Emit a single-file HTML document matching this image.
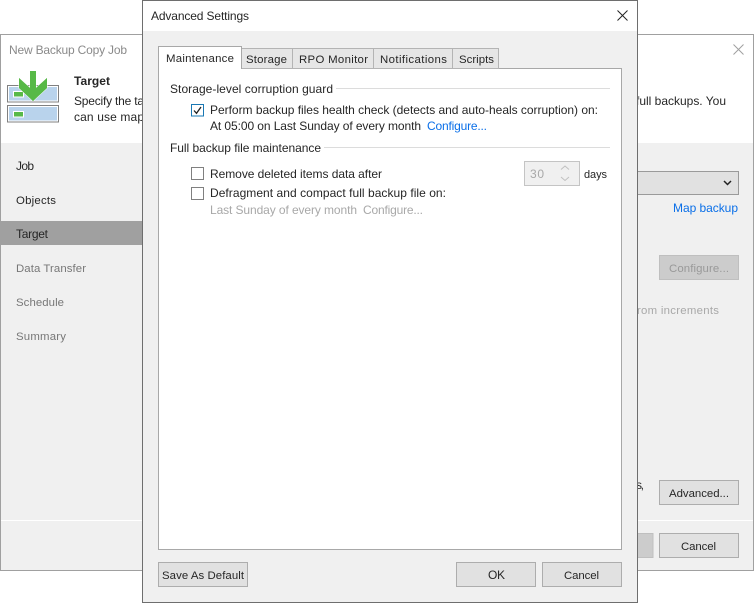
<!DOCTYPE html>
<html><head><meta charset="utf-8"><style>
html,body{margin:0;padding:0;background:#fff;width:754px;height:603px;overflow:hidden}
svg{display:block}
text{font-family:"Liberation Sans",sans-serif;font-size:12px;fill:#262626}
.g{fill:#777}.d{fill:#a8a8a8}.b{fill:#0a6fe8}.btn{fill:#e1e1e1;stroke:#adadad}
.s{font-size:11.4px}
</style></head><body>
<svg width="754" height="603" viewBox="0 0 754 603" xmlns="http://www.w3.org/2000/svg">
<!-- back window -->
<rect x="0.5" y="34.5" width="753" height="536" fill="#f0f0f0" stroke="#a0a0a0"/>
<rect x="1" y="35" width="752" height="108" fill="#fff"/>
<rect x="1" y="520" width="752" height="1" fill="#fff"/>
<text x="9" y="54" class="g" textLength="118" lengthAdjust="spacing" style="fill:#8a8a8a">New Backup Copy Job</text>
<path d="M733.500 44.500l10 10M743.500 44.500l-10 10" stroke="#a0a0a0" fill="none"/>
<!-- icon -->
<rect x="7.500" y="85.500" width="51" height="16.500" fill="#b9d3ec" stroke="#808080"/>
<rect x="8.500" y="86.500" width="49" height="14.500" fill="none" stroke="#fff"/>
<rect x="7.500" y="105.500" width="51" height="16.500" fill="#b9d3ec" stroke="#808080"/>
<rect x="8.500" y="106.500" width="49" height="14.500" fill="none" stroke="#fff"/>
<rect x="13.500" y="91.500" width="10" height="5.500" fill="#57b947" stroke="#fff"/>
<rect x="13.500" y="111.500" width="10" height="5.500" fill="#57b947" stroke="#fff"/>
<path d="M30 71h6v17l11-10v10l-14 13-14-13v-10l11 10z" fill="#57b947" stroke="#fff" stroke-width="1" paint-order="stroke"/>
<path d="M30 71h6v17l11-10v10l-14 13-14-13v-10l11 10z" fill="#57b947"/>
<text x="74" y="85" textLength="36" lengthAdjust="spacing" style="font-weight:bold">Target</text>
<text x="74" y="105" textLength="70" lengthAdjust="spacing">Specify the ta</text>
<text x="74" y="121" textLength="70" lengthAdjust="spacing">can use map</text>
<text x="636" y="105" textLength="90" lengthAdjust="spacing">full backups. You</text>
<!-- sidebar -->
<rect x="1" y="221" width="141" height="24" fill="#a0a0a0"/>
<text x="16" y="170" textLength="18" lengthAdjust="spacing">Job</text>
<text x="16" y="204" class="s" textLength="40" lengthAdjust="spacing">Objects</text>
<text x="16" y="238" textLength="32" lengthAdjust="spacing">Target</text>
<text x="16" y="272" class="g s" textLength="70" lengthAdjust="spacing">Data Transfer</text>
<text x="16" y="306" class="g s" textLength="48" lengthAdjust="spacing">Schedule</text>
<text x="16" y="340" class="g s" textLength="50" lengthAdjust="spacing">Summary</text>
<!-- back right controls -->
<rect x="630.500" y="171.500" width="108" height="23" fill="#e1e1e1" stroke="#9a9a9a"/>
<path d="M724 181l3.500 3.500 3.500-3.500" fill="none" stroke="#222" stroke-width="1.500"/>
<text x="673" y="212" class="b" textLength="65" lengthAdjust="spacing">Map backup</text>
<rect x="659.500" y="255.500" width="79" height="24" fill="#cccccc" stroke="#bfbfbf"/>
<text x="669" y="272" class="s" textLength="60" lengthAdjust="spacing" style="fill:#999">Configure...</text>
<text x="637" y="314" class="d s" textLength="82" lengthAdjust="spacing">rom increments</text>
<text x="636" y="489" textLength="8" lengthAdjust="spacing">s,</text>
<rect x="659.500" y="480.500" width="79" height="24" class="btn"/>
<text x="669" y="497" class="s" textLength="60" lengthAdjust="spacing">Advanced...</text>
<rect x="620" y="533.500" width="33" height="24" fill="#cccccc" stroke="#bfbfbf"/>
<rect x="659.500" y="533.500" width="79" height="24" class="btn"/>
<text x="681" y="550" class="s" textLength="35" lengthAdjust="spacing">Cancel</text>
<!-- front dialog -->
<rect x="142.500" y="0.500" width="495" height="602" fill="#f0f0f0" stroke="#6e6e6e"/>
<rect x="143" y="1" width="494" height="30" fill="#fff"/>
<text x="151" y="20" textLength="98" lengthAdjust="spacing">Advanced Settings</text>
<path d="M617.500 10.500l10 10M627.500 10.500l-10 10" stroke="#222" fill="none"/>
<!-- tabs -->
<rect x="158.500" y="68.500" width="463" height="481" fill="#fff" stroke="#a8a8a8"/>
<rect x="241.500" y="48.500" width="51" height="20" fill="#e6e6e6" stroke="#b4b4b4"/>
<rect x="292.500" y="48.500" width="81" height="20" fill="#e6e6e6" stroke="#b4b4b4"/>
<rect x="373.500" y="48.500" width="79" height="20" fill="#e6e6e6" stroke="#b4b4b4"/>
<rect x="452.500" y="48.500" width="46" height="20" fill="#e6e6e6" stroke="#b4b4b4"/>
<path d="M158.500 69V46.500h83V69" fill="#fff" stroke="#a8a8a8"/>
<rect x="159" y="66" width="82" height="4" fill="#fff"/>
<text x="166" y="62" class="s" textLength="68" lengthAdjust="spacing">Maintenance</text>
<text x="246" y="63" class="s" textLength="41" lengthAdjust="spacing">Storage</text>
<text x="299" y="63" class="s" textLength="69" lengthAdjust="spacing">RPO Monitor</text>
<text x="380" y="63" class="s" textLength="67" lengthAdjust="spacing">Notifications</text>
<text x="459" y="63" class="s" textLength="35" lengthAdjust="spacing">Scripts</text>
<!-- group 1 -->
<text x="170" y="93" textLength="163" lengthAdjust="spacing">Storage-level corruption guard</text>
<rect x="336" y="88" width="274" height="1" fill="#dcdcdc"/>
<rect x="191.500" y="104.500" width="12" height="11.500" fill="#fff" stroke="#1a78b4"/>
<path d="M194 110.500l2.500 2.800 4.500-6.300" fill="none" stroke="#222" stroke-width="1.300"/>
<text x="210" y="114" textLength="388" lengthAdjust="spacing">Perform backup files health check (detects and auto-heals corruption) on:</text>
<text x="210" y="130" textLength="211" lengthAdjust="spacing">At 05:00 on Last Sunday of every month</text>
<text x="427" y="130" class="b" textLength="60" lengthAdjust="spacing">Configure...</text>
<!-- group 2 -->
<text x="170" y="152" textLength="151" lengthAdjust="spacing">Full backup file maintenance</text>
<rect x="324" y="147" width="286" height="1" fill="#dcdcdc"/>
<rect x="191.500" y="167.500" width="12" height="12" fill="#fff" stroke="#808080"/>
<text x="210" y="178" textLength="172" lengthAdjust="spacing">Remove deleted items data after</text>
<rect x="524.500" y="161.500" width="55" height="24" fill="#f0f0f0" stroke="#c4c4c4"/>
<text x="530" y="178" class="d" textLength="14" lengthAdjust="spacing">30</text>
<path d="M561 169.500l4-3.500 4 3.500M561 177l4 3.500 4-3.500" fill="none" stroke="#c0c0c0"/>
<text x="584" y="178" style="font-size:11px" textLength="23" lengthAdjust="spacing">days</text>
<rect x="191.500" y="187.500" width="12" height="12" fill="#fff" stroke="#808080"/>
<text x="210" y="197" textLength="236" lengthAdjust="spacing">Defragment and compact full backup file on:</text>
<text x="210" y="214" class="d" textLength="147" lengthAdjust="spacing">Last Sunday of every month</text>
<text x="363" y="214" class="d" textLength="60" lengthAdjust="spacing">Configure...</text>
<!-- buttons -->
<rect x="158.500" y="562.500" width="89" height="24" class="btn"/>
<text x="162" y="579" class="s" textLength="82" lengthAdjust="spacing">Save As Default</text>
<rect x="456.500" y="562.500" width="79" height="24" class="btn"/>
<text x="488" y="579" textLength="17" lengthAdjust="spacing">OK</text>
<rect x="542.500" y="562.500" width="79" height="24" class="btn"/>
<text x="564" y="579" class="s" textLength="35" lengthAdjust="spacing">Cancel</text>
</svg>
</body></html>
